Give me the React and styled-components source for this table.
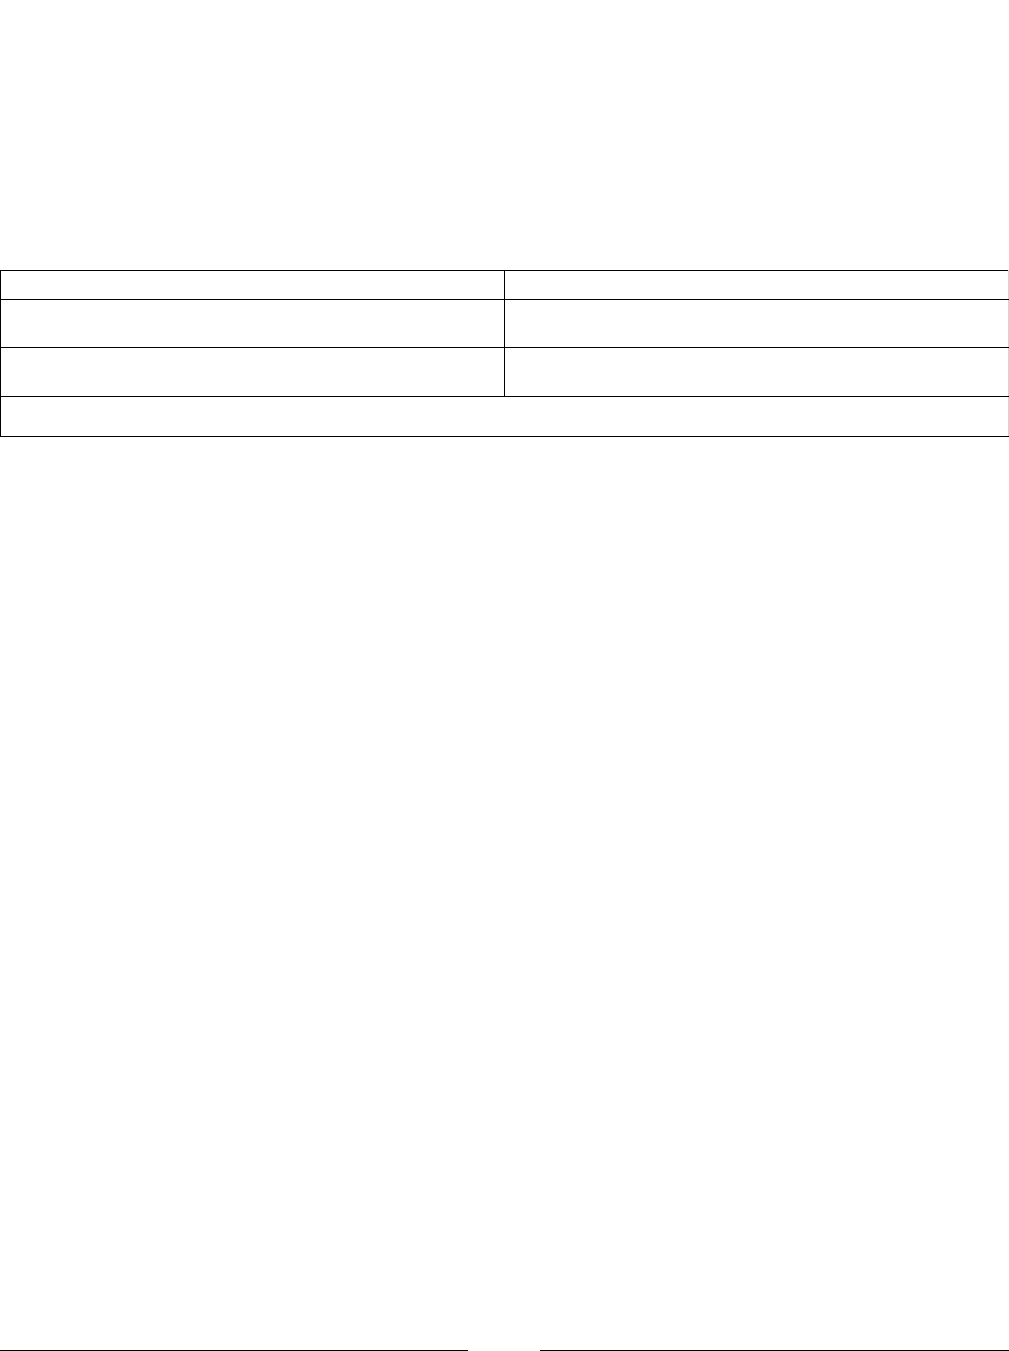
import React from "react";
import styled, { createGlobalStyle } from "styled-components";

const Global = createGlobalStyle`
  html, body { margin: 0; padding: 0; background: #fff; }
  body { font-family: "Liberation Sans", Arial, sans-serif; color: #000; }
`;

const Page = styled.div`
  min-height: 1351px;
  display: flex;
  flex-direction: column;
  padding-top: 270px;
  box-sizing: border-box;
`;

const Table = styled.table`
  width: 1009px;
  border-collapse: collapse;
  table-layout: fixed;
`;

const Cell = styled.td`
  border: 1px solid #000;
  height: ${(p) => p.$h}px;
  padding: 0;
  box-sizing: border-box;
  &:last-child {
    border-right-color: #d4d4d4;
  }
`;

const Footer = styled.div`
  margin-top: auto;
  display: flex;
  gap: 72px;
  align-items: flex-end;
`;

const Rule = styled.div`
  height: 1px;
  background: #000;
  width: ${(p) => (p.$w ? `${p.$w}px` : "auto")};
  flex: ${(p) => (p.$w ? "none" : "1")};
`;

export default function App() {
  return (
    <>
      <Global />
      <Page>
        <Table>
          <colgroup>
            <col style={{ width: 504 }} />
            <col />
          </colgroup>
          <tbody>
            <tr>
              <Cell $h={29} />
              <Cell $h={29} />
            </tr>
            <tr>
              <Cell $h={48} />
              <Cell $h={48} />
            </tr>
            <tr>
              <Cell $h={49} />
              <Cell $h={49} />
            </tr>
            <tr>
              <Cell colSpan={2} $h={40} />
            </tr>
          </tbody>
        </Table>
        <Footer>
          <Rule $w={468} />
          <Rule />
        </Footer>
      </Page>
    </>
  );
}
